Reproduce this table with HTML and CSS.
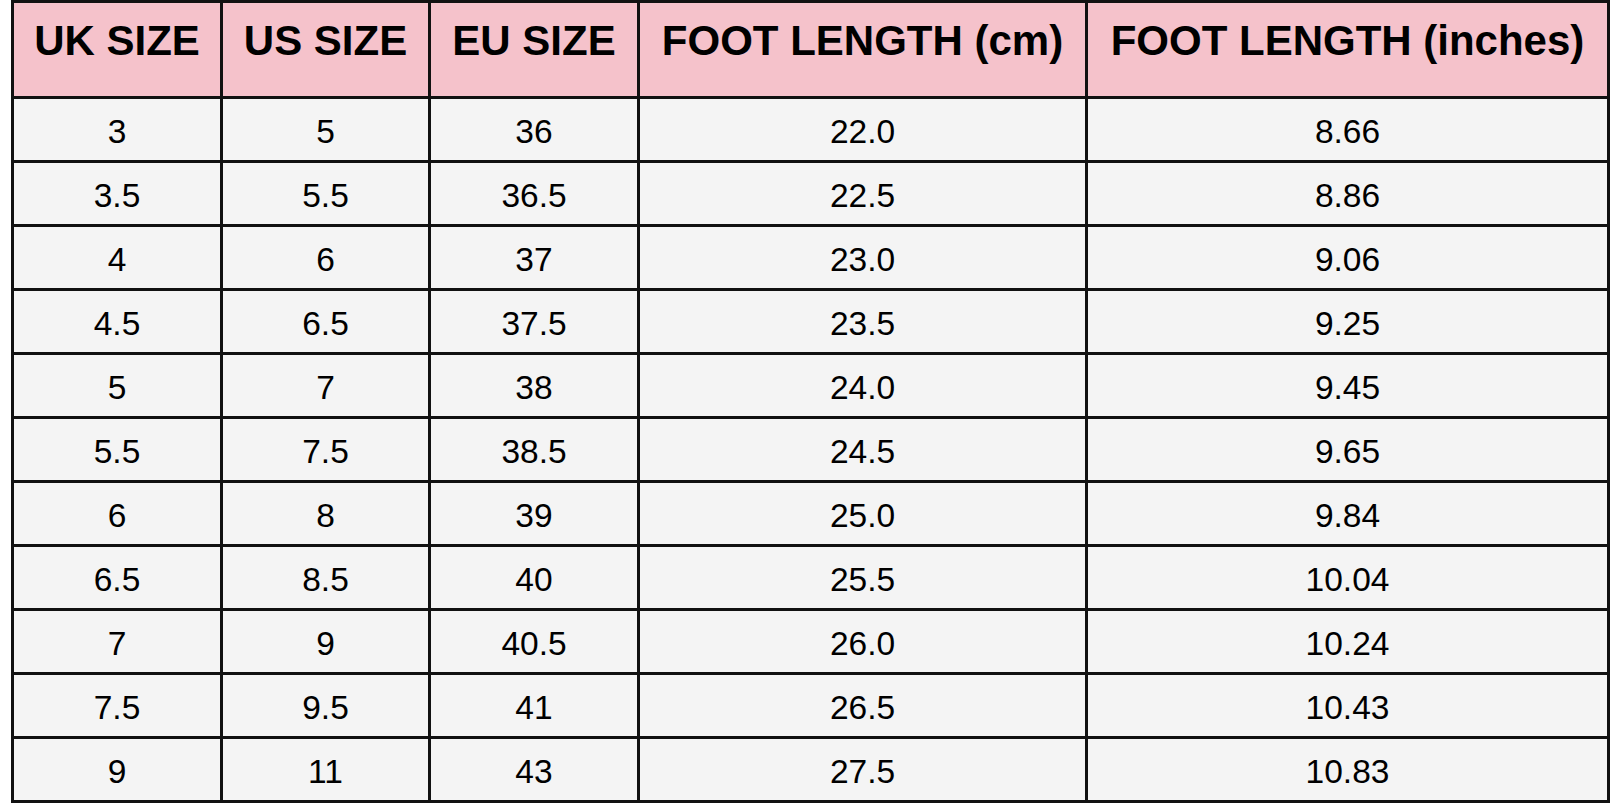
FILE: index.html
```html
<!DOCTYPE html>
<html lang="en">
<head>
<meta charset="utf-8">
<title>Size Chart</title>
<link rel="stylesheet" href="styles.css">
</head>
<body>
<div class="chart" role="table">
  <div class="cell head">UK SIZE</div>
  <div class="cell head">US SIZE</div>
  <div class="cell head">EU SIZE</div>
  <div class="cell head">FOOT LENGTH (cm)</div>
  <div class="cell head">FOOT LENGTH (inches)</div>

  <div class="cell">3</div><div class="cell">5</div><div class="cell">36</div><div class="cell">22.0</div><div class="cell">8.66</div>
  <div class="cell">3.5</div><div class="cell">5.5</div><div class="cell">36.5</div><div class="cell">22.5</div><div class="cell">8.86</div>
  <div class="cell">4</div><div class="cell">6</div><div class="cell">37</div><div class="cell">23.0</div><div class="cell">9.06</div>
  <div class="cell">4.5</div><div class="cell">6.5</div><div class="cell">37.5</div><div class="cell">23.5</div><div class="cell">9.25</div>
  <div class="cell">5</div><div class="cell">7</div><div class="cell">38</div><div class="cell">24.0</div><div class="cell">9.45</div>
  <div class="cell">5.5</div><div class="cell">7.5</div><div class="cell">38.5</div><div class="cell">24.5</div><div class="cell">9.65</div>
  <div class="cell">6</div><div class="cell">8</div><div class="cell">39</div><div class="cell">25.0</div><div class="cell">9.84</div>
  <div class="cell">6.5</div><div class="cell">8.5</div><div class="cell">40</div><div class="cell">25.5</div><div class="cell">10.04</div>
  <div class="cell">7</div><div class="cell">9</div><div class="cell">40.5</div><div class="cell">26.0</div><div class="cell">10.24</div>
  <div class="cell">7.5</div><div class="cell">9.5</div><div class="cell">41</div><div class="cell">26.5</div><div class="cell">10.43</div>
  <div class="cell">9</div><div class="cell">11</div><div class="cell">43</div><div class="cell">27.5</div><div class="cell">10.83</div>
</div>
</body>
</html>
```

FILE: styles.css
```css
html, body {
  margin: 0;
  padding: 0;
  background: #ffffff;
}

body {
  padding-left: 11px;
  font-family: "Liberation Sans", Arial, Helvetica, sans-serif;
  color: #000;
}

.chart {
  display: grid;
  width: 1599px;
  height: 803px;
  box-sizing: border-box;
  padding: 3px;
  gap: 3px;
  background: #111111;
  grid-template-columns: 206px 205px 206px 445px 519px;
  grid-template-rows: 93px repeat(11, 1fr);
}

.cell {
  background: #f4f4f4;
  display: flex;
  align-items: center;
  justify-content: center;
  box-sizing: border-box;
  padding-top: 4px;
  font-size: 33.5px;
  line-height: 1;
  white-space: nowrap;
}

.head {
  background: #f5c2cb;
  font-weight: bold;
  font-size: 42px;
  line-height: 48px;
  align-items: flex-start;
  padding-top: 14px;
}
```
